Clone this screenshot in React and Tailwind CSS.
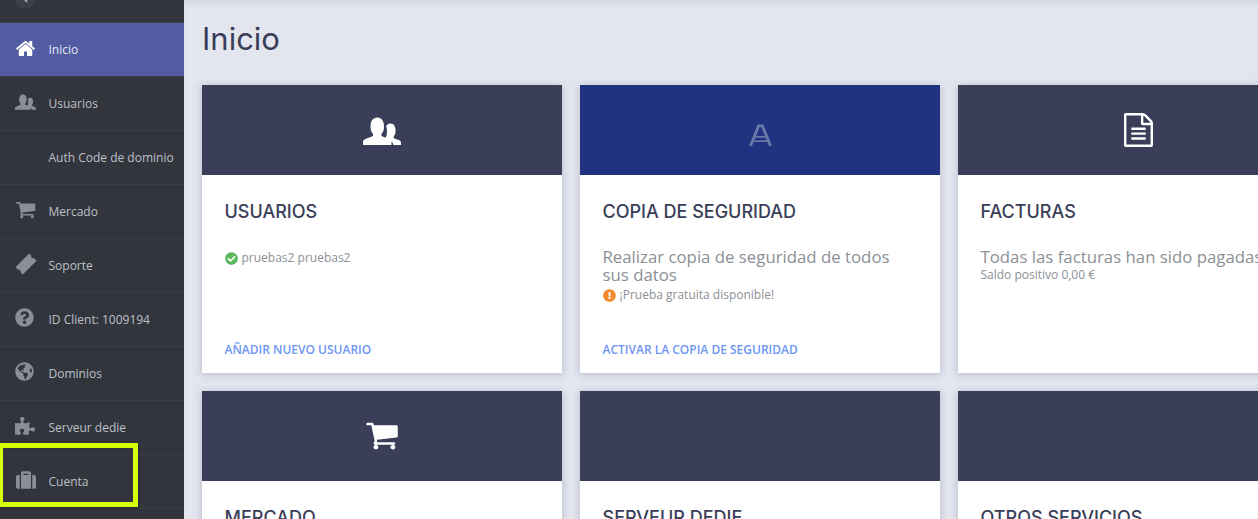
import React from 'react';
import { FaQuestionCircle, FaGlobeAmericas, FaPuzzlePiece, FaSuitcase, FaCheckCircle, FaExclamationCircle, FaChevronLeft } from 'react-icons/fa';

const UsersIcon = ({ className }) => (
  <svg viewBox="0 0 38 28" className={className} fill="currentColor">
    <path d="M0 28v-2.500c0-2 1.200-3 3.500-3.900l5.500-2.100c1-.5 1.300-1.500 1-2.500-1.600-1.800-2.500-4-2.500-7.500C7.500 4 10 .5 14.300.5S21 4 21 9.500c0 3.500-.9 5.700-2.500 7.500-.3 1 0 2 1 2.500l5.500 2.100c2.300.9 3.500 1.900 3.500 3.900V28z" />
    <path d="M29.500 28h8.500v-2c0-1.700-1-2.500-2.800-3.200l-3.700-1.400c-.8-.4-1-1.200-.8-2 1.200-1.400 1.900-3.200 1.900-5.900 0-4.200-1.900-7-5.100-7-2 0-3.500 1-4.300 2.800.6 1.700.8 3.400.8 5.200 0 3-.7 5.600-2 7.700l6 2.300c1.700.7 2.300 2 2.300 3.500z" />
  </svg>
);

const HomeIcon = ({ className }) => (
  <svg viewBox="0 0 1792 1792" className={className} fill="currentColor">
    <path d="M1472 992v480q0 26-19 45t-45 19h-384v-384h-256v384h-384q-26 0-45-19t-19-45v-480q0-1 .5-3t.5-3l575-474 575 474q1 2 1 6zm223-69l-62 74q-8 9-21 11h-3q-13 0-21-7l-692-577-692 577q-12 8-24 7-13-2-21-11l-62-74q-8-10-7-23.500t11-21.500l719-599q32-26 76-26t76 26l244 204v-195q0-14 9-23t23-9h192q14 0 23 9t9 23v408l219 182q10 8 11 21.500t-7 23.500z" />
  </svg>
);

const CartIcon = ({ className }) => (
  <svg viewBox="0 0 1792 1792" className={className} fill="currentColor">
    <path d="M704 1536q0 52-38 90t-90 38-90-38-38-90 38-90 90-38 90 38 38 90zm896 0q0 52-38 90t-90 38-90-38-38-90 38-90 90-38 90 38 38 90zm128-1088v512q0 24-16.500 42.500t-40.500 21.500l-1044 122q13 60 13 70 0 16-24 64h920q26 0 45 19t19 45-19 45-45 19h-1024q-26 0-45-19t-19-45q0-11 8-31.500t16-36 21.500-40 15.500-29.500l-177-823h-204q-26 0-45-19t-19-45 19-45 45-19h256q16 0 28.500 6.500t19.500 15.500 13 24.500 8 26 5.500 29.500 4.500 26h1201q26 0 45 19t19 45z" />
  </svg>
);

const FileIcon = ({ className }) => (
  <svg viewBox="128 0 1536 1792" className={className} fill="currentColor">
    <path d="M1596 380q28 28 48 76t20 88v1152q0 40-28 68t-68 28h-1344q-40 0-68-28t-28-68v-1600q0-40 28-68t68-28h896q40 0 88 20t76 48zm-444-244v376h376q-10-29-22-41l-313-313q-12-12-41-22zm384 1528v-1024h-416q-40 0-68-28t-28-68v-416h-768v1536h1280zm-1024-864q0-14 9-23t23-9h704q14 0 23 9t9 23v64q0 14-9 23t-23 9h-704q-14 0-23-9t-9-23v-64zm736 224q14 0 23 9t9 23v64q0 14-9 23t-23 9h-704q-14 0-23-9t-9-23v-64q0-14 9-23t23-9h704zm0 256q14 0 23 9t9 23v64q0 14-9 23t-23 9h-704q-14 0-23-9t-9-23v-64q0-14 9-23t23-9h704z" />
  </svg>
);

// solid ticket, running from bottom left to top right
const TicketIcon = ({ className }) => (
  <svg viewBox="0 0 24 24" className={className} fill="currentColor">
    <path d="M15.500.5l2.300 2.300c-.4.8-.2 1.600.4 2.200s1.400.8 2.200.4l3.100 3.100L8.500 23.500l-2.600-2.600c.4-.8.2-1.600-.4-2.200s-1.400-.8-2.200-.4L.5 15.500z" />
  </svg>
);

const AcronisIcon = ({ className }) => (
  <svg viewBox="0 0 24 24" className={className} fill="none" stroke="currentColor" strokeWidth="3">
    <path d="M1.500 24 10 3h4l8.500 21" />
    <path d="M6 14.500h12M3.500 19h17" strokeWidth="1.800" />
  </svg>
);

const menu = [
  { label: 'Inicio', icon: <HomeIcon className="w-[21px] h-[21px] mt-[1px]" />, active: true },
  { label: 'Usuarios', icon: <UsersIcon className="w-[21px] h-[16px]" /> },
  { label: 'Auth Code de dominio' },
  { label: 'Mercado', icon: <CartIcon className="w-[21px] h-[21px]" /> },
  { label: 'Soporte', icon: <TicketIcon className="w-[22px] h-[22px]" /> },
  { label: 'ID Client: 1009194', icon: <FaQuestionCircle className="w-[19px] h-[19px]" /> },
  { label: 'Dominios', icon: <FaGlobeAmericas className="w-[19px] h-[19px]" /> },
  { label: 'Serveur dedie', icon: <FaPuzzlePiece className="w-[20px] h-[20px]" /> },
  { label: 'Cuenta', icon: <FaSuitcase className="w-[22px] h-[20px]" /> },
];

const SideItem = ({ item }) => (
  <a className={`flex items-center h-[54px] shrink-0 border-b border-[#3c3f48] ${item.active ? 'bg-[#525ca3] text-[#e4e6f2]' : 'text-[#bcc0c8]'}`}>
    <span className={`w-[48.500px] pl-[15px] flex items-center -mt-1 ${item.active ? 'text-white' : 'text-[#8b8e95]'}`}>
      {item.icon}
    </span>
    <span className="text-[12px]">{item.label}</span>
  </a>
);

const Card = ({ title, icon, head = 'bg-[#3a3e59]', children, link }) => (
  <div className="bg-white h-[288px] flex flex-col shadow-[0_1px_8px_rgba(60,65,90,0.28)]">
    <div className={`${head} h-[90px] shrink-0 flex items-center justify-center text-white`}>{icon}</div>
    <div className="flex-1 flex flex-col px-[22.500px] pt-[27px] pb-[14px]">
      <h3 className="text-[#3a3e59] text-[18px] leading-[20px] font-medium font-['Inter',sans-serif] whitespace-nowrap">{title}</h3>
      <div className="flex-1 mt-[26px] text-[#8c9096]">{children}</div>
      {link && <a className="text-[#6d95f5] text-[12px] font-semibold">{link}</a>}
    </div>
  </div>
);

export default function App() {
  return (
    <div className="relative flex h-screen w-full overflow-hidden bg-[#e3e6ef] font-['Open_Sans',sans-serif]">
      {/* Sidebar */}
      <aside className="w-[184px] shrink-0 bg-[#33353d] flex flex-col">
        <div className="h-[23px] shrink-0 border-b border-[#3c3f48] overflow-hidden pl-[14px]">
          <div className="w-[22px] h-[22px] -mt-[13px] rounded-full bg-[#3c3f48] flex items-center justify-center text-[#b4b7bd]">
            <FaChevronLeft className="w-[10px] h-[10px]" />
          </div>
        </div>
        {menu.map((item) => <SideItem key={item.label} item={item} />)}
      </aside>

      {/* Highlight box */}
      <div className="absolute -left-[2px] top-[443px] w-[140px] h-[64px] border-[5px] border-[#d8ff00] shadow-[0_1px_3px_rgba(0,0,0,0.4)]"></div>

      {/* Main content */}
      <main className="flex-1 min-w-0 px-[18px] shadow-[inset_0_5px_6px_-3px_rgba(60,65,90,0.12)]">
        <h1 className="text-[#3a3e59] text-[31px] leading-[38px] mt-[20px] mb-[27px] font-['Inter',sans-serif]">Inicio</h1>
        <div className="grid grid-cols-[repeat(3,360px)] gap-[18px]">
          <Card title="USUARIOS" icon={<UsersIcon className="w-[38px] h-[28px] mt-[1px]" />} link="AÑADIR NUEVO USUARIO">
            <div className="flex items-center gap-[4px] text-[12px] mt-[1px]">
              <FaCheckCircle className="w-[13px] h-[13px] text-[#5cb85c]" />
              <span>pruebas2 pruebas2</span>
            </div>
          </Card>
          <Card title="COPIA DE SEGURIDAD" head="bg-[#203380]" icon={<AcronisIcon className="w-[23px] h-[23px] text-[#6a77a8] mt-[9px]" />} link="ACTIVAR LA COPIA DE SEGURIDAD">
            <p className="text-[16.800px] leading-[18px]">Realizar copia de seguridad de todos sus datos</p>
            <div className="flex items-center gap-[4px] text-[12px] mt-[2px]">
              <FaExclamationCircle className="w-[13px] h-[13px] text-[#f58b2c]" />
              <span>¡Prueba gratuita disponible!</span>
            </div>
          </Card>
          <Card title="FACTURAS" icon={<FileIcon className="w-[29px] h-[34px]" />}>
            <p className="text-[16.800px] leading-[18px] whitespace-nowrap">Todas las facturas han sido pagadas</p>
            <p className="text-[12px] leading-[16px] mt-[1px]">Saldo positivo 0,00 €</p>
          </Card>
          <Card title="MERCADO" icon={<CartIcon className="w-[34px] h-[34px] -mt-[3px]" />} />
          <Card title="SERVEUR DEDIE" />
          <Card title="OTROS SERVICIOS" />
        </div>
      </main>
    </div>
  );
}
